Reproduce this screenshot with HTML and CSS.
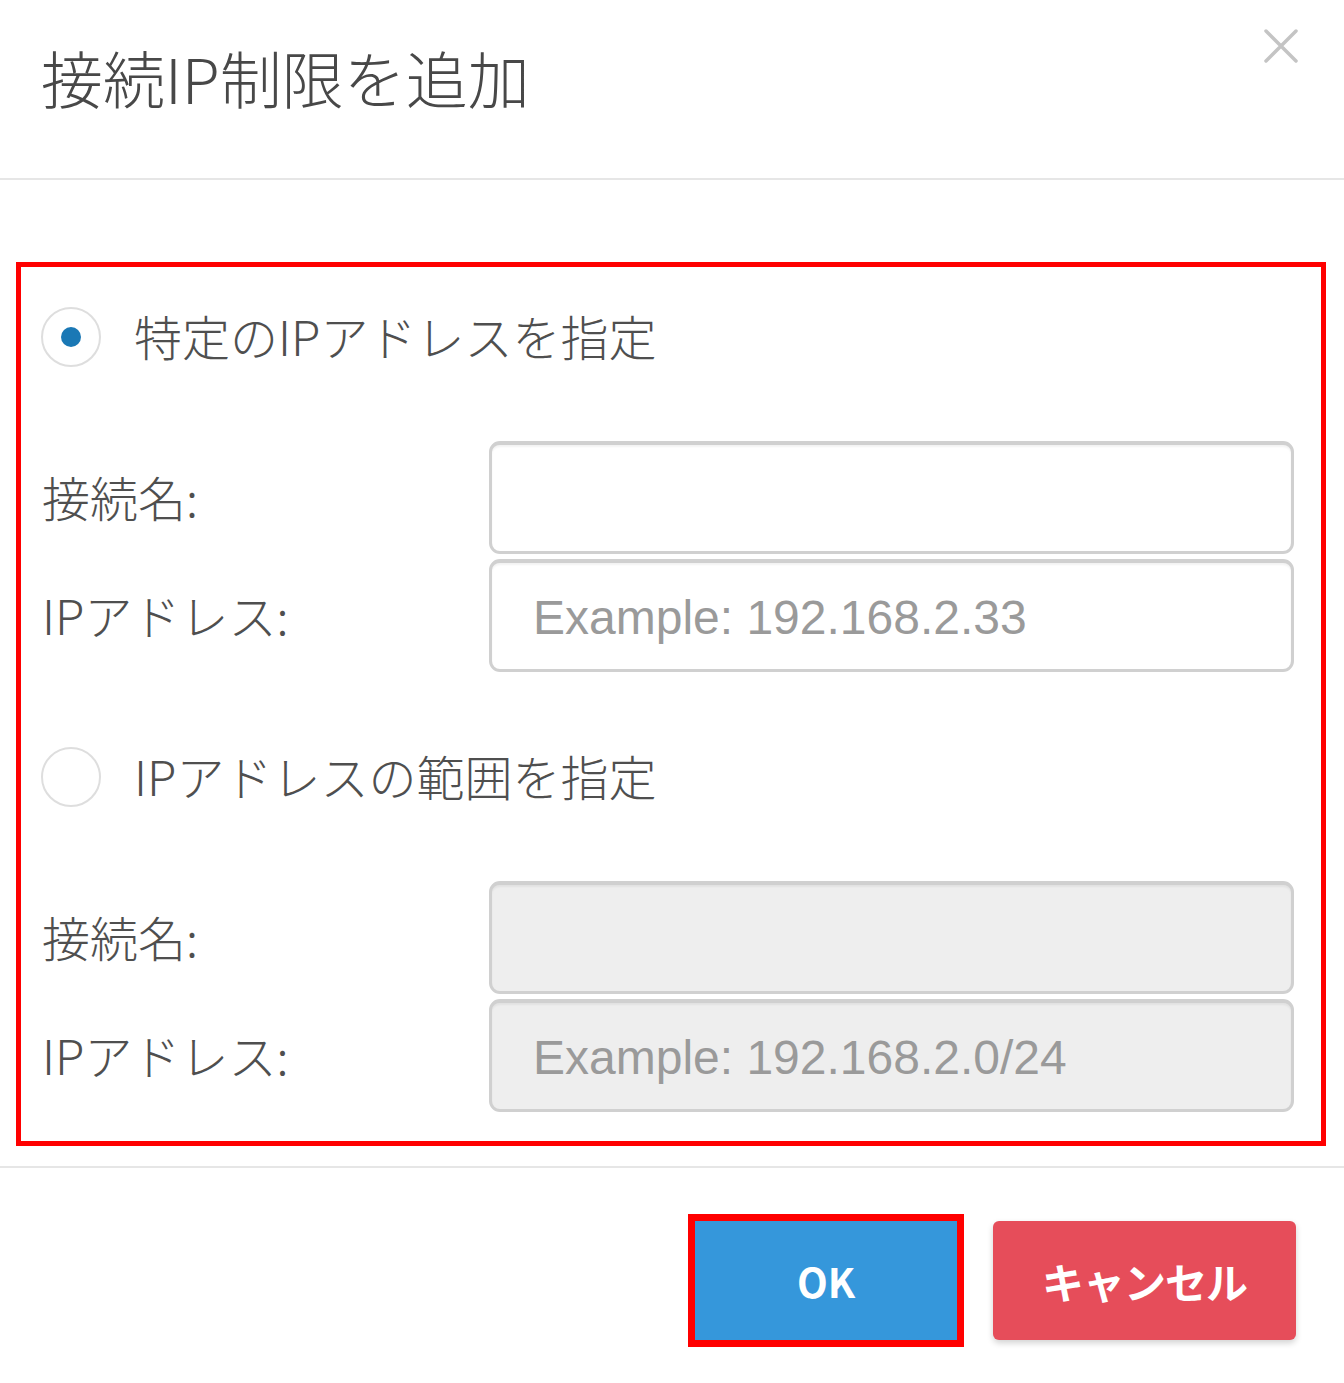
FILE: index.html
```html
<!DOCTYPE html>
<html lang="ja">
<head>
<meta charset="utf-8">
<title>接続IP制限を追加</title>
<link rel="stylesheet" href="styles.css">
</head>
<body>
<div class="modal">
  <div class="modal-header">
    <h1 class="modal-title">接続IP制限を追加</h1>
    <button class="close" aria-label="close">
      <svg width="34" height="34" viewBox="0 0 34 34"><path d="M2 2 L32 32 M32 2 L2 32" stroke="#c4c4c4" stroke-width="3.5" stroke-linecap="round"/></svg>
    </button>
  </div>
  <div class="modal-body">
    <div class="highlight">
      <label class="radio-row">
        <span class="radio checked"><span class="dot"></span></span>
        <span class="radio-label">特定のIPアドレスを指定</span>
      </label>
      <div class="fields">
        <div class="field">
          <span class="field-label">接続名:</span>
          <div class="input"></div>
        </div>
        <div class="field">
          <span class="field-label">IPアドレス:</span>
          <div class="input"><span class="placeholder">Example: 192.168.2.33</span></div>
        </div>
      </div>
      <label class="radio-row second">
        <span class="radio"></span>
        <span class="radio-label">IPアドレスの範囲を指定</span>
      </label>
      <div class="fields">
        <div class="field">
          <span class="field-label">接続名:</span>
          <div class="input disabled"></div>
        </div>
        <div class="field">
          <span class="field-label">IPアドレス:</span>
          <div class="input disabled"><span class="placeholder">Example: 192.168.2.0/24</span></div>
        </div>
      </div>
    </div>
  </div>
  <div class="modal-footer">
    <button class="btn btn-ok">OK</button>
    <button class="btn btn-cancel">キャンセル</button>
  </div>
</div>
</body>
</html>
```
FILE: styles.css
```css
* { box-sizing: border-box; }
html, body { margin: 0; padding: 0; background: #fff; }
body {
  font-family: "Noto Sans CJK JP", "Open Sans", sans-serif;
  color: #555;
  width: 1344px;
  height: 1383px;
  overflow: hidden;
}
.modal { width: 1344px; }
.modal-header {
  display: flex;
  justify-content: space-between;
  align-items: flex-start;
  height: 180px;
  border-bottom: 2px solid #e6e6e6;
  padding: 40px 46px 0 41px;
}
.modal-title {
  margin: 0;
  font-size: 62px;
  line-height: 74px;
  font-weight: 300;
  color: #484848;
  letter-spacing: 0;
}
.close {
  border: 0;
  background: none;
  padding: 0;
  margin-top: -11px;
  width: 34px;
  height: 34px;
  display: block;
}
.close svg { display: block; }
.modal-body { padding: 82px 18px 20px 16px; }
.highlight {
  border: 5px solid #ff0000;
  padding: 40px 27px 29px 21px;
}
.radio-row {
  display: flex;
  align-items: center;
  height: 60px;
  margin-left: -1px;
}
.radio-row.second { margin-top: 75px; }
.radio {
  width: 60px;
  height: 60px;
  border-radius: 50%;
  border: 2px solid #dedede;
  display: flex;
  align-items: center;
  justify-content: center;
  flex: none;
}
.dot {
  width: 20px;
  height: 20px;
  border-radius: 50%;
  background: #1a78b5;
}
.radio-label {
  margin-left: 33px;
  font-size: 48px;
  font-weight: 300;
  color: #4f4f4f;
  line-height: 60px;
  margin-top: -4px;
}
.fields {
  margin-top: 74px;
  display: flex;
  flex-direction: column;
  gap: 5px;
}
.field {
  display: grid;
  grid-template-columns: 447px 1fr;
  align-items: center;
}
.field-label {
  font-size: 48px;
  font-weight: 300;
  color: #4f4f4f;
  margin-top: -4px;
}
.input {
  height: 113px;
  border: 3px solid #d0d0d0;
  border-top-width: 4px;
  border-radius: 11px;
  background: #fff;
  box-shadow: inset 0 2px 2px rgba(0,0,0,0.05);
  display: flex;
  align-items: center;
  padding-left: 41px;
}
.input.disabled { background: #eeeeee; }
.placeholder {
  font-family: "Liberation Sans", Arial, sans-serif;
  font-size: 48px;
  color: #9a9a9a;
  margin-top: 2px;
}
.modal-footer {
  border-top: 2px solid #e6e6e6;
  display: flex;
  justify-content: flex-end;
  gap: 36px;
  padding: 53px 48px 0 0;
}
.btn {
  height: 119px;
  border: 0;
  color: #fff;
  font-family: "Noto Sans CJK JP", "Open Sans", sans-serif;
  font-weight: 700;
  padding: 0;
}
.btn-ok {
  width: 262px;
  background: #3597db;
  font-size: 40px;
  outline: 7px solid #ff0000;
  outline-offset: 0;
}
.btn-cancel {
  width: 303px;
  background: #e64d5a;
  font-size: 42px;
  border-radius: 6px;
  box-shadow: 0 3px 6px rgba(0,0,0,0.18);
  letter-spacing: -1px;
}
```
